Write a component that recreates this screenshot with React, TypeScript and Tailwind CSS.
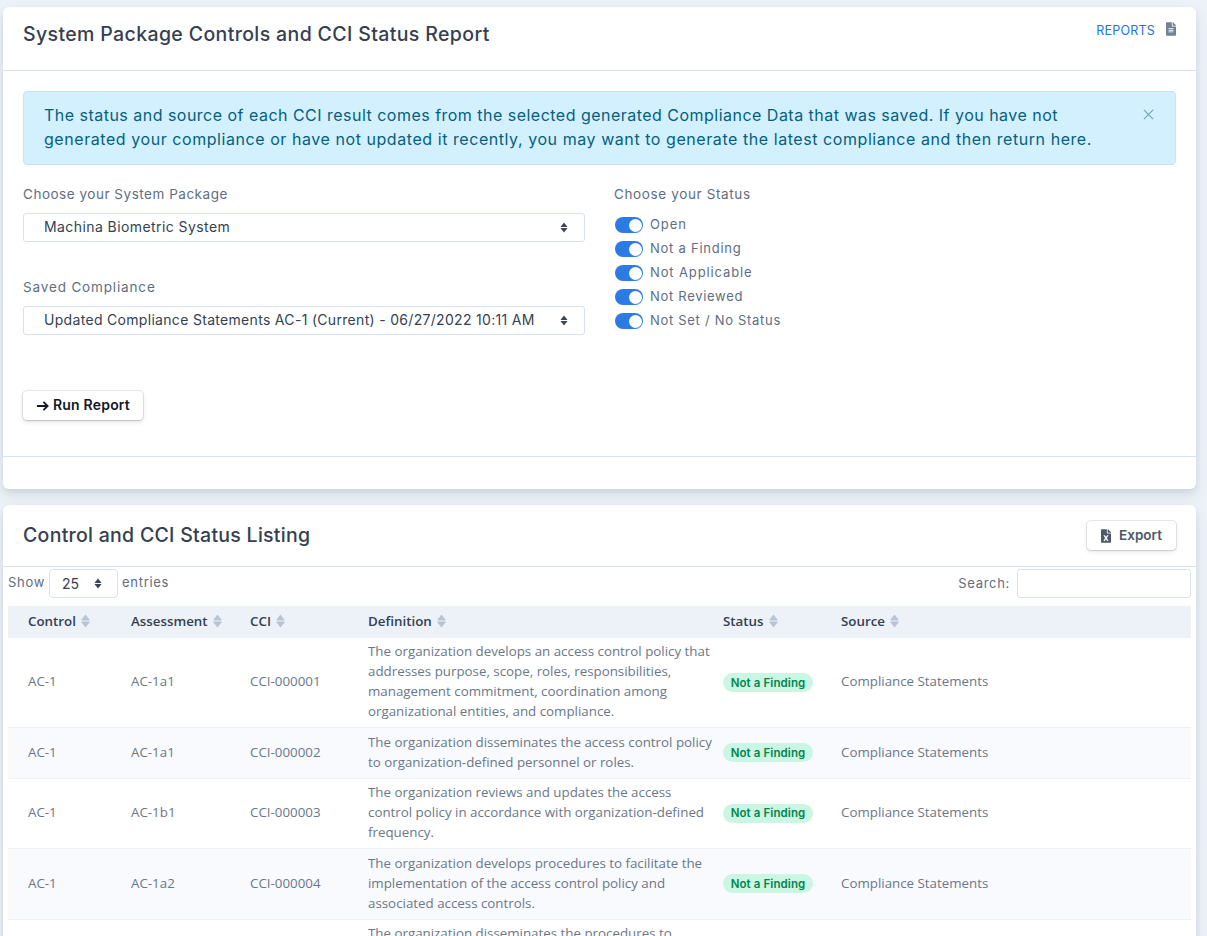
import React from "react";

const PP = "font-['Inter',sans-serif]";
const OS = "font-['Open_Sans',sans-serif]";

function Updown({ cls, w = 8, h = 13 }: { cls: string; w?: number; h?: number }) {
  return (
    <svg viewBox="0 0 8 13" width={w} height={h} className={cls} fill="currentColor" aria-hidden>
      <path d="M4 0.5 L7.8 5.4 Q8 6 7.3 6 H0.7 Q0 6 0.2 5.4 Z" />
      <path d="M4 12.5 L7.8 7.6 Q8 7 7.3 7 H0.7 Q0 7 0.2 7.6 Z" />
    </svg>
  );
}

function SelectBox({ text, className }: { text: string; className: string }) {
  return (
    <div className={`flex items-center justify-between h-[29px] border border-[#d8e2ef] rounded-[3px] bg-white text-[#343f52] ${className}`}>
      <span className="whitespace-nowrap pb-[2px]">{text}</span>
      <Updown cls="text-[#3c4657]" w={8} h={11} />
    </div>
  );
}

function Toggle({ label, cls }: { label: string; cls: string }) {
  return (
    <div className="flex items-center h-6 gap-[7px]">
      <span className="flex items-center justify-end w-7 h-4 rounded-full bg-[#2c7be5] pr-[1px]">
        <span className="w-[13px] h-[13px] rounded-full bg-white" />
      </span>
      <span className={`text-[13px] text-[#5e6e82] ${cls}`}>{label}</span>
    </div>
  );
}

const rows = [
  ["AC-1", "AC-1a1", "CCI-000001", "h-[89px]", "The organization develops an access control policy that addresses purpose, scope, roles, responsibilities, management commitment, coordination among organizational entities, and compliance."],
  ["AC-1", "AC-1a1", "CCI-000002", "h-[51px]", "The organization disseminates the access control policy to organization-defined personnel or roles."],
  ["AC-1", "AC-1b1", "CCI-000003", "h-[70px]", "The organization reviews and updates the access control policy in accordance with organization-defined frequency."],
  ["AC-1", "AC-1a2", "CCI-000004", "h-[71px]", "The organization develops procedures to facilitate the implementation of the access control policy and associated access controls."],
];

function Th({ label, first }: { label: string; first?: boolean }) {
  return (
    <th className={`${first ? "pl-5" : "pl-[10px]"} pr-0 pb-[2px] text-left font-semibold`}>
      <span className="inline-flex items-center gap-[5px]">
        {label}
        <Updown cls="text-[#b9c3d4]" w={9} h={14} />
      </span>
    </th>
  );
}

const tog: [string, string][] = [
  ["Open", "tracking-[0.9px]"],
  ["Not a Finding", "tracking-[0.75px]"],
  ["Not Applicable", "tracking-[0.88px]"],
  ["Not Reviewed", "tracking-[0.7px]"],
  ["Not Set / No Status", "tracking-[0.7px]"],
];

export default function App() {
  return (
    <div className={`${PP} bg-[#edf2f9] h-[936px] overflow-hidden pt-[7px] pl-[3px] pr-[11px]`}>
      <section className="bg-white rounded-[6px] shadow-[0_7px_14px_rgba(65,69,88,0.1),0_3px_6px_rgba(0,0,0,0.07)]">
        <header className="h-[64px] border-b border-[#d8e2ef] pl-5 pr-[20px] flex justify-between">
          <h1 className="text-[19.5px] font-medium text-[#344050] mt-[13px] tracking-[0.37px]">System Package Controls and CCI Status Report</h1>
          <div className="flex items-start gap-[11px] pt-[15px]">
            <span className="text-[12.5px] text-[#2272e8] tracking-[0.2px]">REPORTS</span>
            <svg viewBox="0 0 384 512" width="10" height="14" className="text-[#748194]" fill="currentColor">
              <path d="M224 136V0H24C10.700 0 0 10.700 0 24v464c0 13.300 10.700 24 24 24h336c13.300 0 24-10.700 24-24V160H248c-13.200 0-24-10.800-24-24zm64 236c0 6.600-5.400 12-12 12H108c-6.600 0-12-5.400-12-12v-8c0-6.600 5.400-12 12-12h168c6.600 0 12 5.400 12 12v8zm0-64c0 6.600-5.400 12-12 12H108c-6.600 0-12-5.400-12-12v-8c0-6.600 5.400-12 12-12h168c6.600 0 12 5.400 12 12v8zm0-72v8c0 6.600-5.400 12-12 12H108c-6.600 0-12-5.400-12-12v-8c0-6.600 5.400-12 12-12h168c6.600 0 12 5.400 12 12zm96-114.100v6.100H256V0h6.100c6.400 0 12.500 2.500 17 7l97.900 98c4.500 4.500 7 10.600 7 16.900z" />
            </svg>
          </div>
        </header>

        <div className="h-[386px] border-b border-[#d8e2ef] px-5 pt-5">
          <div className="h-[74px] flex justify-between rounded-[4px] border border-[#bde9fb] bg-[#d2f0fe] pl-5 pr-[21px] pt-[11px] text-[16px] leading-[24px] text-[#055f7f]">
            <p className="whitespace-nowrap">
              <span className="tracking-[0.48px]">The status and source of each CCI result comes from the selected generated Compliance Data that was saved. If you have not</span>
              <br />
              <span className="tracking-[0.56px]">generated your compliance or have not updated it recently, you may want to generate the latest compliance and then return here.</span>
            </p>
            <svg viewBox="0 0 12 12" width="11" height="11" className="text-[#6ea3b8] mt-[6px]" stroke="currentColor" strokeWidth="1.2" fill="none">
              <path d="M1 1L11 11M11 1L1 11" />
            </svg>
          </div>

          <div className="flex gap-[29px] mt-[19px]">
            <div className="w-[562px] shrink-0">
              <label className="block text-[13.5px] leading-[20px] tracking-[0.52px] text-[#5e6e82]">Choose your System Package</label>
              <SelectBox text="Machina Biometric System" className="mt-[9px] pl-5 pr-[16px] text-[14px] tracking-[0.42px]" />
              <label className="block mt-[35px] text-[13.5px] leading-[20px] tracking-[0.85px] text-[#5e6e82]">Saved Compliance</label>
              <SelectBox text="Updated Compliance Statements AC-1 (Current) - 06/27/2022 10:11 AM" className="mt-[9px] pl-5 pr-[16px] text-[14px] tracking-[0.31px]" />
            </div>
            <div>
              <label className="block text-[13.5px] leading-[20px] tracking-[0.63px] text-[#5e6e82]">Choose your Status</label>
              <div className="mt-[9px] ml-[1px]">
                {tog.map(([s, c]) => (
                  <Toggle key={s} label={s} cls={c} />
                ))}
              </div>
            </div>
          </div>

          <button className="mt-[56px] h-[29px] w-[120px] flex items-center justify-center gap-[4px] rounded-[4px] bg-white text-[14px] font-semibold text-[#111827] tracking-[0.2px] shadow-[0_0_0_1px_rgba(43,45,80,0.1),0_2px_5px_rgba(43,45,80,0.12),0_1px_1.500px_rgba(0,0,0,0.1)]">
            <svg viewBox="0 0 14 12" width="13" height="12" stroke="currentColor" strokeWidth="2" fill="none">
              <path d="M1 6H12.500M8 1.500L12.500 6L8 10.500" />
            </svg>
            <span className="pb-[2px]">Run Report</span>
          </button>
        </div>
        <div className="h-[32px]" />
      </section>

      <section className="mt-[16px] bg-white rounded-[6px] pb-4 shadow-[0_7px_14px_rgba(65,69,88,0.1),0_3px_6px_rgba(0,0,0,0.07)]">
        <header className="h-[62px] border-b border-[#d8e2ef] pl-5 pr-[20px] flex justify-between items-start">
          <h2 className="text-[19.5px] font-medium text-[#344050] mt-[16px] tracking-[0.28px]">Control and CCI Status Listing</h2>
          <button className="mt-[16px] h-[29px] w-[89px] flex items-center justify-center gap-[8px] rounded-[4px] bg-white text-[13.5px] font-semibold text-[#4d5969] shadow-[0_0_0_1px_rgba(43,45,80,0.1),0_2px_5px_rgba(43,45,80,0.1),0_1px_1.500px_rgba(0,0,0,0.08)]">
            <svg viewBox="0 0 384 512" width="10" height="14" fill="currentColor">
              <path d="M224 136V0H24C10.700 0 0 10.700 0 24v464c0 13.300 10.700 24 24 24h336c13.300 0 24-10.700 24-24V160H248c-13.200 0-24-10.800-24-24zm60.100 106.500L224 336l60.100 93.500c5.100 8-.6 18.500-10.100 18.500h-34.900c-4.400 0-8.500-2.400-10.600-6.300C208.900 405.500 192 373 192 373c-6.400 14.800-10 20-36.600 68.800-2.100 3.900-6.100 6.300-10.500 6.300H110c-9.500 0-15.200-10.500-10.100-18.500l60.300-93.500-60.300-93.500c-5.200-8 .6-18.500 10.100-18.500h34.800c4.400 0 8.500 2.400 10.600 6.300 26.100 48.800 20 33.600 36.600 68.500 0 0 6.100-11.700 36.600-68.500 2.100-3.900 6.200-6.300 10.600-6.300H274c9.500-.1 15.200 10.400 10.100 18.400zM384 121.900v6.100H256V0h6.100c6.400 0 12.500 2.500 17 7l97.900 98c4.500 4.500 7 10.600 7 16.900z" />
            </svg>
            Export
          </button>
        </header>

        <div className="pl-[5px] pr-[5px]">
          <div className="h-[39px] flex justify-between items-start pt-[2px] text-[13px] tracking-[0.7px] text-[#5e6e82]">
            <div className="flex items-start">
              <span className="mt-[4px]">Show</span>
              <div className="ml-[4px] w-[69px] h-[29px] flex items-center justify-between border border-[#d8e2ef] rounded-[4px] pl-[12px] pr-[15px] text-[14px] tracking-normal text-[#343f52]">
                25 <Updown cls="text-[#3c4657]" w={8} h={11} />
              </div>
              <span className="ml-[4px] mt-[4px]">entries</span>
            </div>
            <div className="flex items-start">
              <span className="mt-[5px] mr-[7px]">Search:</span>
              <input aria-label="Search" className="w-[174px] h-[29px] border border-[#d8e2ef] rounded-[3px] bg-white" />
            </div>
          </div>

          <table className={`${OS} w-full table-fixed border-collapse text-[13.33px] leading-[20px] text-[#6b7789]`}>
            <colgroup>
              <col className="w-[113px]" />
              <col className="w-[119px]" />
              <col className="w-[118px]" />
              <col className="w-[355px]" />
              <col className="w-[118px]" />
              <col />
            </colgroup>
            <thead>
              <tr className="h-[32px] bg-[#edf2f9] text-[#344050]">
                <Th label="Control" first />
                <Th label="Assessment" />
                <Th label="CCI" />
                <Th label="Definition" />
                <Th label="Status" />
                <Th label="Source" />
              </tr>
            </thead>
            <tbody>
              {rows.map((r, i) => (
                <tr key={r[2]} className={`${r[3]} border-b border-[#edf2f9] ${i % 2 === 1 ? "bg-[#f9fafd]" : "bg-white"}`}>
                  <td className="pl-5 pb-[2px]">{r[0]}</td>
                  <td className="pl-[10px] pb-[2px]">{r[1]}</td>
                  <td className="pl-[10px] pb-[2px]">{r[2]}</td>
                  <td className="pl-[10px] pb-[2px]">{r[4]}</td>
                  <td className="pl-[10px] pb-[1px]">
                    <span className={`${PP} inline-flex items-center h-[19px] w-[90px] justify-center rounded-full bg-[#ccf6e4] text-[11.5px] font-semibold tracking-[0.1px] text-[#00864e]`}>Not a Finding</span>
                  </td>
                  <td className="pl-[10px] pb-[2px]">Compliance Statements</td>
                </tr>
              ))}
              <tr className="bg-white align-top">
                <td className="pl-5" />
                <td />
                <td />
                <td className="pl-[10px] pt-[3px]">The organization disseminates the procedures to</td>
                <td />
                <td />
              </tr>
            </tbody>
          </table>
        </div>
      </section>
    </div>
  );
}
